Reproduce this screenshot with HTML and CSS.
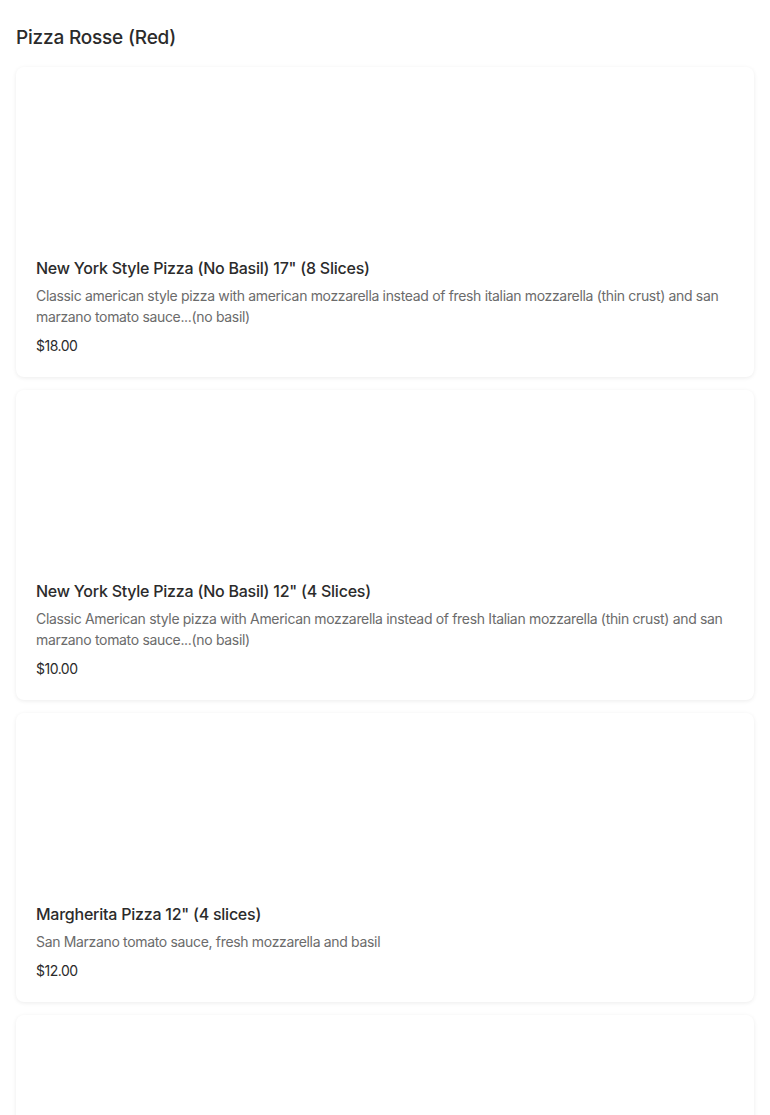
FILE: index.html
```html
<!DOCTYPE html>
<html lang="en">

<head>
    <meta charset="UTF-8">
    <title>Pizza Rosse (Red)</title>
    <link rel="stylesheet" href="styles.css">
</head>

<body>

    <section class="menu-section">
        <h2 class="section-title">Pizza Rosse (Red)</h2>

        <div class="item-list">
            <div class="item-card">
                <div class="item-photo"></div>
                <h3 class="item-name">New York Style Pizza (No Basil) 17" (8 Slices)</h3>
                <p class="item-desc">Classic american style pizza with american mozzarella instead of fresh italian mozzarella (thin crust) and san marzano tomato sauce...(no basil)</p>
                <p class="item-price">$18.00</p>
            </div>

            <div class="item-card">
                <div class="item-photo"></div>
                <h3 class="item-name">New York Style Pizza (No Basil) 12" (4 Slices)</h3>
                <p class="item-desc">Classic American style pizza with American mozzarella instead of fresh Italian mozzarella (thin crust) and san marzano tomato sauce...(no basil)</p>
                <p class="item-price">$10.00</p>
            </div>

            <div class="item-card">
                <div class="item-photo"></div>
                <h3 class="item-name">Margherita Pizza 12" (4 slices)</h3>
                <p class="item-desc">San Marzano tomato sauce, fresh mozzarella and basil</p>
                <p class="item-price">$12.00</p>
            </div>

            <div class="item-card">
                <div class="item-photo"></div>
            </div>
        </div>
    </section>

</body>

</html>
```

FILE: styles.css
```css
body {
    margin: 0;
    background-color: #fff;
    font-family: Inter, Lato, sans-serif;
    color: #2a2a2a;
}

.menu-section {
    padding: 24px 16px;
}

.section-title {
    margin: 0 0 15px;
    font-size: 19px;
    line-height: 28px;
    font-weight: 500;
    letter-spacing: -0.2px;
    color: #2b2b2b;
}

.item-list {
    display: flex;
    flex-direction: column;
    gap: 13px;
}

.item-card {
    padding: 0 20px 21px;
    border-radius: 8px;
    background-color: #fff;
    box-shadow: 0 1px 4px rgba(0, 0, 0, 0.08);
}

.item-photo {
    height: 189px;
}

.item-name {
    margin: 0;
    font-size: 16px;
    line-height: 24px;
    font-weight: 500;
    letter-spacing: -0.24px;
    color: #2b2b2b;
}

.item-desc {
    margin: 5px 0 0;
    font-size: 14px;
    line-height: 21px;
    letter-spacing: -0.33px;
    color: #6b6b6b;
}

.item-price {
    margin: 8px 0 0;
    font-size: 14px;
    line-height: 21px;
    letter-spacing: -0.5px;
    color: #2b2b2b;
}
```
